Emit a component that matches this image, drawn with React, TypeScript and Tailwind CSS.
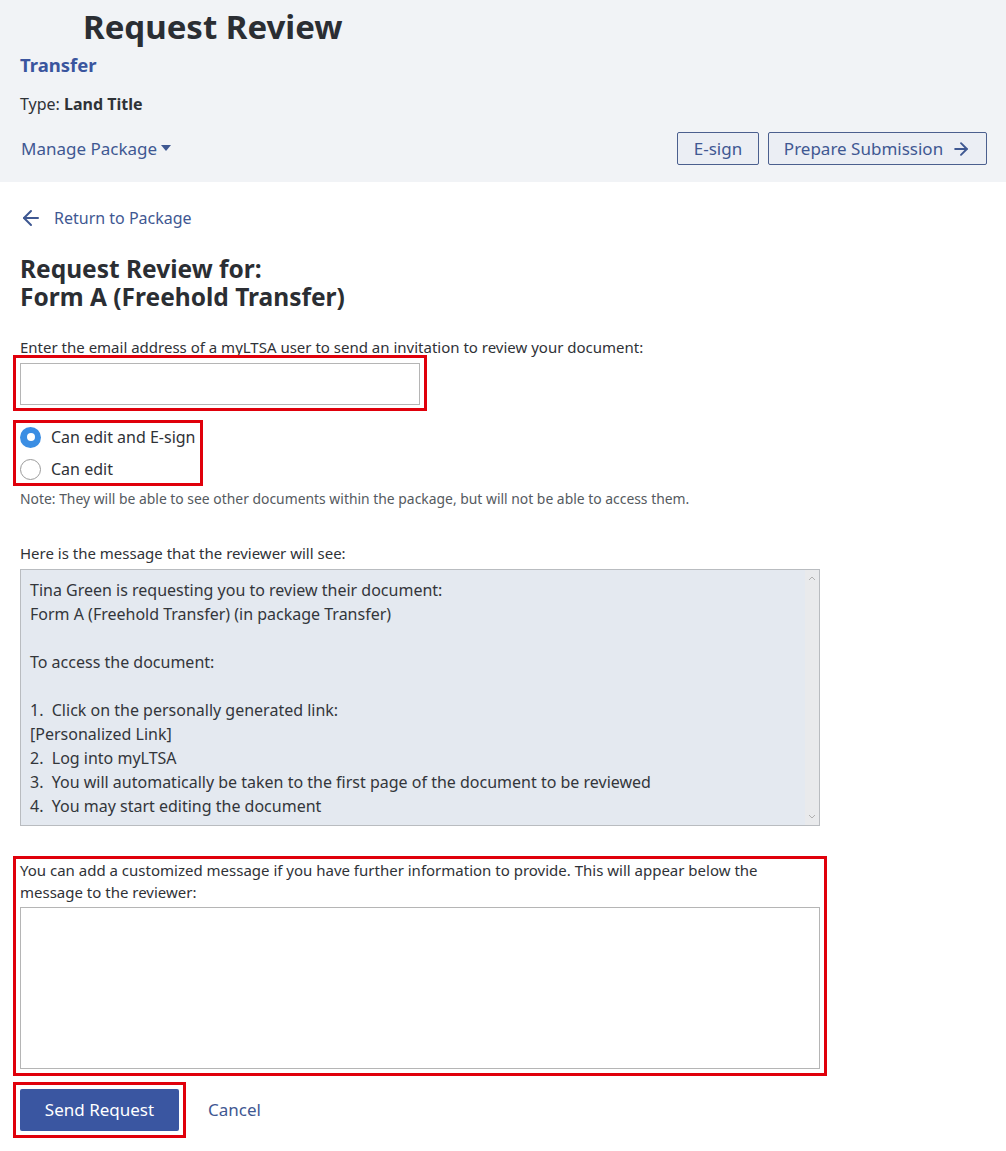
import { ArrowLeft, ArrowRight } from 'lucide-react';

const font = { fontFamily: '"Noto Sans", "Open Sans", Arial, sans-serif' };

// red annotation frame laid over a block
function Mark({ className }: { className: string }) {
  return <span className={`pointer-events-none absolute border-[3px] border-[#e0000b] ${className}`} />;
}

function Radio({ checked, label }: { checked?: boolean; label: string }) {
  return (
    <label className="flex h-[32px] items-center gap-[10px] text-[16px] text-[#2f3237]">
      {checked ? (
        <span className="flex h-[21px] w-[21px] items-center justify-center rounded-full bg-[#3b8ee3]">
          <span className="h-[8px] w-[8px] rounded-full bg-white" />
        </span>
      ) : (
        <span className="h-[21px] w-[21px] rounded-full border border-[#9a9a9a] bg-white" />
      )}
      {label}
    </label>
  );
}

const messageLines = [
  'Tina Green is requesting you to review their document:',
  'Form A (Freehold Transfer) (in package Transfer)',
  '',
  'To access the document:',
  '',
  '1.  Click on the personally generated link:',
  '[Personalized Link]',
  '2.  Log into myLTSA',
  '3.  You will automatically be taken to the first page of the document to be reviewed',
  '4.  You may start editing the document',
];

export default function App() {
  return (
    <div className="min-h-[1151px] bg-white" style={font}>
      {/* header */}
      <div className="bg-[#f1f3f6] pb-[17px] pl-[20px] pr-[19px] pt-[7px]">
        <h1 className="pl-[63px] text-[33px] font-bold leading-[40px] text-[#2b2e33]">Request Review</h1>
        <div className="mt-[6px] text-[18.5px] font-bold leading-[24px] text-[#3a559e]">Transfer</div>
        <div className="mt-[15px] text-[16px] leading-[24px] text-[#2f3237]">
          Type: <span className="font-bold">Land Title</span>
        </div>
        <div className="mt-[16px] flex h-[33px] items-center justify-between">
          <button className="flex items-center gap-[4px] pl-[1px] text-[17px] text-[#3f5892]">
            Manage Package
            <svg width="10" height="6" viewBox="0 0 10 6" className="mt-[-2px]">
              <path d="M0 0h10L5 6z" fill="#3f5892" />
            </svg>
          </button>
          <div className="flex gap-[9px]">
            <button className="h-[33px] w-[82px] rounded-[2px] border border-[#4b5f8e] bg-[#ebeef4] text-[17px] text-[#3f5892]">
              E-sign
            </button>
            <button className="flex h-[33px] w-[219px] items-center justify-center gap-[8px] rounded-[2px] border border-[#4b5f8e] bg-[#ebeef4] text-[17px] text-[#3f5892]">
              Prepare Submission
              <ArrowRight size={20} strokeWidth={2.3} />
            </button>
          </div>
        </div>
      </div>

      <div className="px-[20px] pb-[20px]">
        <a className="mt-[24px] flex h-[24px] items-center gap-[11px] text-[16px] text-[#3f5892]">
          <ArrowLeft size={24} strokeWidth={2} className="-ml-[1px]" />
          Return to Package
        </a>

        <h2 className="mt-[25px] text-[24.5px] font-bold text-[#2b2e33]">
          <div className="h-[28px] leading-[28px]">Request Review for:</div>
          <div className="h-[28px] leading-[28px]">Form A (Freehold Transfer)</div>
        </h2>

        <p className="mt-[26px] text-[15px] leading-[20px] text-[#2f3237]">
          Enter the email address of a myLTSA user to send an invitation to review your document:
        </p>
        <div className="relative mt-[6px] w-[400px]">
          <input type="email" className="block h-[42px] w-[400px] border border-[#b5b5b5] bg-white px-2 outline-none" />
          <Mark className="-bottom-[6px] -left-[7px] -right-[7px] -top-[8px]" />
        </div>

        <div className="relative mt-[16px] w-fit">
          <Radio checked label="Can edit and E-sign" />
          <Radio label="Can edit" />
          <Mark className="-bottom-[1px] -left-[7px] -right-[7px] -top-[1px]" />
        </div>

        <p className="mt-[5px] text-[13.9px] leading-[18px] text-[#555a60]">
          Note: They will be able to see other documents within the package, but will not be able to access them.
        </p>

        <p className="mt-[35px] text-[15px] leading-[20px] text-[#2f3237]">
          Here is the message that the reviewer will see:
        </p>
        <div className="mt-[6px] flex h-[257px] w-[800px] border border-[#b9bcc0] bg-[#e4e9f0]">
          <div className="flex-1 pl-[9px] pt-[8px] text-[16px] leading-[24px] text-[#33363b]">
            {messageLines.map((l, i) => (
              <div key={i} className="h-[24px] whitespace-pre">
                {l}
              </div>
            ))}
          </div>
          <div className="flex w-[14px] flex-col items-center justify-between bg-[#e9eaec] py-[6px]">
            <svg width="8" height="5" viewBox="0 0 8 5">
              <path d="M1 4l3-3 3 3" fill="none" stroke="#b0b0b0" strokeWidth="1" />
            </svg>
            <svg width="8" height="5" viewBox="0 0 8 5">
              <path d="M1 1l3 3 3-3" fill="none" stroke="#b0b0b0" strokeWidth="1" />
            </svg>
          </div>
        </div>

        <div className="relative mt-[33px] w-[800px]">
          <p className="text-[15px] leading-[22px] text-[#2f3237]">
            You can add a customized message if you have further information to provide. This will appear below the
            message to the reviewer:
          </p>
          <textarea className="mt-[4px] block h-[162px] w-[800px] resize-none border border-[#b5b5b5] bg-white outline-none" />
          <Mark className="-bottom-[7px] -left-[7px] -right-[7px] -top-[3px]" />
        </div>

        <div className="mt-[20px] flex items-center gap-[29px]">
          <div className="relative">
            <button className="h-[42px] w-[159px] rounded-[2px] bg-[#3a56a1] text-[17px] text-white">Send Request</button>
            <Mark className="-bottom-[7px] -left-[7px] -right-[7px] -top-[7px]" />
          </div>
          <button className="text-[17px] text-[#3f5892]">Cancel</button>
        </div>
      </div>
    </div>
  );
}
